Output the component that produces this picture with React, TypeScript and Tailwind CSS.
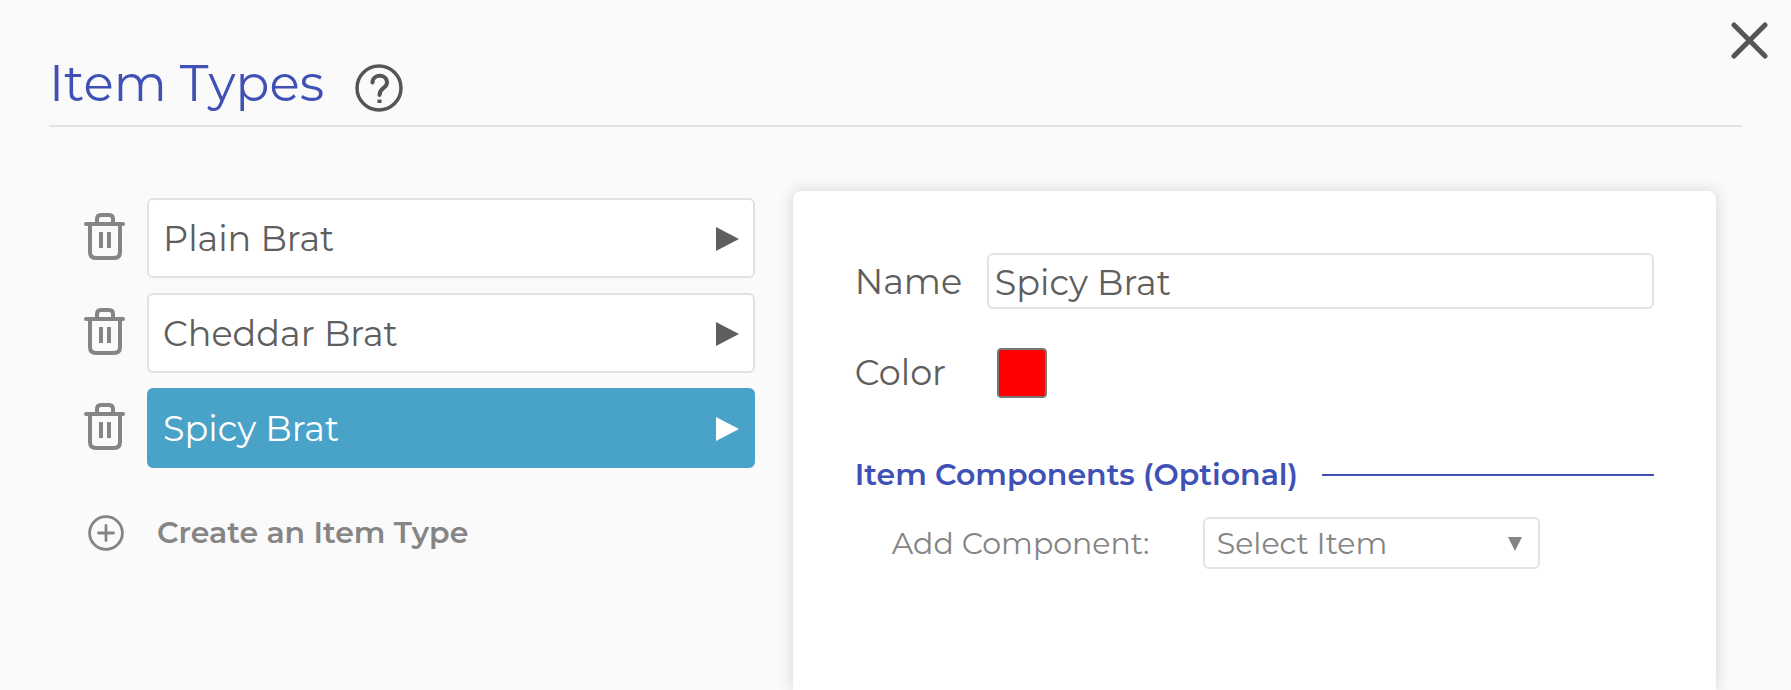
import React, { useState } from 'react';

interface ItemType {
    id: string;
    name: string;
    color: string;
}

interface ItemRowProps {
    item: ItemType;
    selected: boolean;
    onSelect: (id: string) => void;
    onDelete: (id: string) => void;
}

const initialItems: ItemType[] = [
    { id: 'plain', name: 'Plain Brat', color: '#ffcc00' },
    { id: 'cheddar', name: 'Cheddar Brat', color: '#ff8800' },
    { id: 'spicy', name: 'Spicy Brat', color: '#ff0000' },
];

const TrashIcon: React.FC = () => (
    <svg width="42" height="48" viewBox="0 0 42 48" fill="none" stroke="currentColor" strokeWidth="4" strokeLinecap="round" aria-hidden="true">
        <path d="M2 12H39" />
        <path d="M13 11V7Q13 3 17 3H25Q29 3 29 7V11" />
        <path d="M6 12V40Q6 46 12 46H30Q36 46 36 40V12" />
        <path d="M17 20V36M25 20V36" strokeLinecap="butt" />
    </svg>
);

const ItemRow: React.FC<ItemRowProps> = ({ item, selected, onSelect, onDelete }) => {
    return (
        <li className="flex items-center gap-[21px]">
            <button type="button" aria-label={`Delete ${item.name}`} onClick={() => onDelete(item.id)} className="shrink-0 pb-1 text-[#858585]">
                <TrashIcon />
            </button>
            <button
                type="button"
                onClick={() => onSelect(item.id)}
                className={`flex h-20 flex-1 items-center justify-between rounded-md border-2 px-3.5 pt-0.5 text-left text-[35px] ${
                    selected ? 'border-[#49a2c7] bg-[#49a2c7] text-white' : 'border-[#e2e2e2] bg-white text-[#5e5e5e]'
                }`}
            >
                <span>{item.name}</span>
                <svg width="23" height="24" viewBox="0 0 23 24" fill="currentColor" aria-hidden="true">
                    <path d="M0 0L23 12L0 24Z" />
                </svg>
            </button>
        </li>
    );
};

const App: React.FC = () => {
    const [items, setItems] = useState(initialItems);
    const [selectedId, setSelectedId] = useState('spicy');
    const current = items.find((item) => item.id === selectedId);

    const updateCurrent = (changes: Partial<ItemType>) => {
        setItems(items.map((item) => (item.id === selectedId ? { ...item, ...changes } : item)));
    };

    const createItem = () => {
        const id = String(Date.now());
        setItems([...items, { id, name: '', color: '#ff0000' }]);
        setSelectedId(id);
    };

    return (
        <div className="relative flex min-h-screen flex-col overflow-hidden bg-[#fafafa] font-['Montserrat','Inter',sans-serif] text-[#5e5e5e]">
            <button type="button" aria-label="Close" className="absolute right-[22px] top-[22px] text-[#555555]">
                <svg width="38" height="38" viewBox="0 0 38 38" stroke="currentColor" strokeWidth="5" strokeLinecap="round" aria-hidden="true">
                    <path d="M3 3L34 34M34 3L3 34" />
                </svg>
            </button>

            {/* Title bar */}
            <header className="mx-[49px] flex h-[127px] items-end gap-[31px] border-b-2 border-[#e2e2e2] pb-3">
                <h1 className="text-[50px] leading-[58px] text-[#3f51b5]">Item Types</h1>
                <button type="button" aria-label="Help" className="pb-px text-[#555555]">
                    <svg width="48" height="48" viewBox="0 0 48 48" fill="none" stroke="currentColor" strokeLinecap="round" aria-hidden="true">
                        <circle cx="24" cy="24" r="22" strokeWidth="3.5" />
                        <path d="M17.5 18.5C17.5 9.5 32 9.5 32 18.5C32 24.5 24.5 23.5 24.5 31" strokeWidth="4" />
                        <path d="M24.5 35.5V39" strokeWidth="4" strokeLinecap="butt" />
                    </svg>
                </button>
            </header>

            <main className="flex flex-1 gap-[38px] pl-[84px] pr-[75px] pt-16">
                {/* List of item types */}
                <section className="w-[41.1%] pt-[7px]">
                    <ul className="flex flex-col gap-[15px]">
                        {items.map((item) => (
                            <ItemRow
                                key={item.id}
                                item={item}
                                selected={item.id === selectedId}
                                onSelect={setSelectedId}
                                onDelete={(id) => setItems(items.filter((other) => other.id !== id))}
                            />
                        ))}
                    </ul>
                    <button type="button" onClick={createItem} className="mt-[47px] flex items-center gap-[33px] pl-1 text-[30px] font-semibold leading-9 text-[#858585]">
                        <svg width="36" height="36" viewBox="0 0 36 36" fill="none" stroke="currentColor" strokeWidth="2.8" strokeLinecap="round" aria-hidden="true">
                            <circle cx="18" cy="18" r="16.4" />
                            <path d="M10.5 18H25.5M18 10.5V25.5" />
                        </svg>
                        Create an Item Type
                    </button>
                </section>

                {/* Details of the selected item type */}
                <section className="flex-1 rounded-t-lg bg-white px-[62px] pt-[62px] shadow-[0_0_16px_rgba(0,0,0,0.16)]">
                    <div className="flex items-center">
                        <label htmlFor="item-name" className="w-[132px] pt-0.5 text-[35px]">
                            Name
                        </label>
                        <input
                            id="item-name"
                            type="text"
                            value={current?.name ?? ''}
                            onChange={(e) => updateCurrent({ name: e.target.value })}
                            className="h-14 min-w-0 flex-1 rounded-md border-2 border-[#e2e2e2] bg-white px-1.5 pt-0.5 text-[35px] outline-none"
                        />
                    </div>

                    <div className="mt-[39px] flex items-center">
                        <label htmlFor="item-color" className="w-[142px] text-[35px] leading-[50px]">
                            Color
                        </label>
                        <input
                            id="item-color"
                            type="color"
                            value={current?.color ?? '#ffffff'}
                            onChange={(e) => updateCurrent({ color: e.target.value })}
                            className="size-[50px] appearance-none rounded-sm [&::-webkit-color-swatch-wrapper]:p-0 [&::-webkit-color-swatch]:rounded-sm [&::-webkit-color-swatch]:border-2 [&::-webkit-color-swatch]:border-[#777777]"
                        />
                    </div>

                    <div className="mt-[59px] flex items-center gap-6">
                        <h2 className="text-[30px] font-semibold leading-9 text-[#3f51b5]">Item Components (Optional)</h2>
                        <div className="h-0.5 flex-1 bg-[#3f51b5]"></div>
                    </div>

                    <div className="mt-6 flex items-center pl-[37px] text-[#858585]">
                        <label htmlFor="add-component" className="w-[311px] text-[30px]">
                            Add Component:
                        </label>
                        <div className="relative w-[337px]">
                            <select
                                id="add-component"
                                defaultValue=""
                                className="h-[52px] w-full appearance-none rounded-md border-2 border-[#e2e2e2] bg-white px-3 text-[30px] outline-none"
                            >
                                <option value="">Select Item</option>
                                {items.map((item) => (
                                    <option key={item.id} value={item.id}>
                                        {item.name}
                                    </option>
                                ))}
                            </select>
                            <svg className="pointer-events-none absolute right-[18px] top-5" width="14" height="14" viewBox="0 0 14 14" fill="currentColor" aria-hidden="true">
                                <path d="M0 0H14L7 14Z" />
                            </svg>
                        </div>
                    </div>
                </section>
            </main>
        </div>
    );
};

export default App;
